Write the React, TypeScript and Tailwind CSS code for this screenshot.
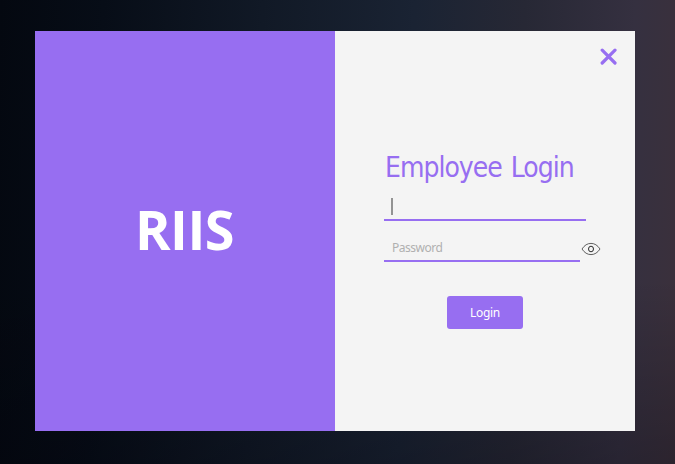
import { useState } from "react";

function EyeIcon() {
  return (
    <svg width="20" height="14" viewBox="0 0 20 14" fill="none">
      <path d="M1 7C3.500 3.200 6.400 1.400 10 1.400S16.500 3.200 19 7C16.500 10.800 13.600 12.600 10 12.600S3.500 10.800 1 7Z" stroke="#444" strokeWidth="0.85" />
      <ellipse cx="10" cy="7" rx="2.500" ry="2.800" stroke="#161616" strokeWidth="0.9" />
    </svg>
  );
}

function CloseIcon() {
  return (
    <svg width="18" height="18" viewBox="0 0 18 18" stroke="#976ef1" strokeWidth="3.200" strokeLinecap="round">
      <path d="M2.200 2.200L15 15M15 2.200L2.200 15" />
    </svg>
  );
}

export default function App() {
  const [visible, setVisible] = useState(false);

  return (
    <main className="h-[464px] w-[675px] overflow-hidden bg-[linear-gradient(180deg,transparent_0%,transparent_60%,rgba(0,0,8,0.26)_100%),linear-gradient(92deg,#040810_0%,#070d17_15%,#111926_38%,#1a2333_60%,#272835_76%,#353040_92%,#3b303b_100%)] pl-[35px] pt-[31px] font-['Noto_Sans','Open_Sans',sans-serif]">
      <div className="flex h-[400px] w-[600px]">
        <section className="flex w-[300px] items-center justify-center bg-[#976ef1]">
          <h1 className="mr-px mb-[4px] font-['Open_Sans',sans-serif] text-[54px] leading-[76px] font-bold tracking-[-0.5px] text-white">RIIS</h1>
        </section>
        <section className="flex w-[300px] flex-col bg-[#f4f4f4]">
          <div className="flex h-[110px] justify-end pt-[17px] pr-[17px]">
            <button type="button" aria-label="Close" className="size-[18px]">
              <CloseIcon />
            </button>
          </div>
          <form className="flex flex-col pl-[49px]" onSubmit={(e) => e.preventDefault()}>
            <h2 className="h-[52px] pl-px font-['DejaVu_Sans',sans-serif] text-[28px] leading-[54px] font-stretch-condensed tracking-[-1px] [word-spacing:2px] whitespace-nowrap text-[#976ef1]">
              Employee Login
            </h2>
            <div className="flex h-[28px] w-[202px] border-b-2 border-[#976ef1] pt-[5px] pl-[7px]">
              <span className="h-[17px] w-[2px] bg-[#939393]" />
            </div>
            <div className="flex h-[41px] items-end">
              <input
                type={visible ? "text" : "password"}
                placeholder="Password"
                className="h-[30px] w-[196px] border-b-2 border-[#976ef1] px-2 pt-[2px] text-xs tracking-[-0.5px] outline-none placeholder:text-[#b0b0b0]"
              />
              <button
                type="button"
                aria-label="Show password"
                className="mb-[6px] ml-[1px] h-[14px] w-[20px]"
                onClick={() => setVisible(!visible)}
              >
                <EyeIcon />
              </button>
            </div>
            <button type="submit" className="mt-[34px] ml-[63px] h-[33px] w-[76px] rounded-[3px] bg-[#976ef1] text-xs tracking-[-0.3px] text-white">
              Login
            </button>
          </form>
        </section>
      </div>
    </main>
  );
}
